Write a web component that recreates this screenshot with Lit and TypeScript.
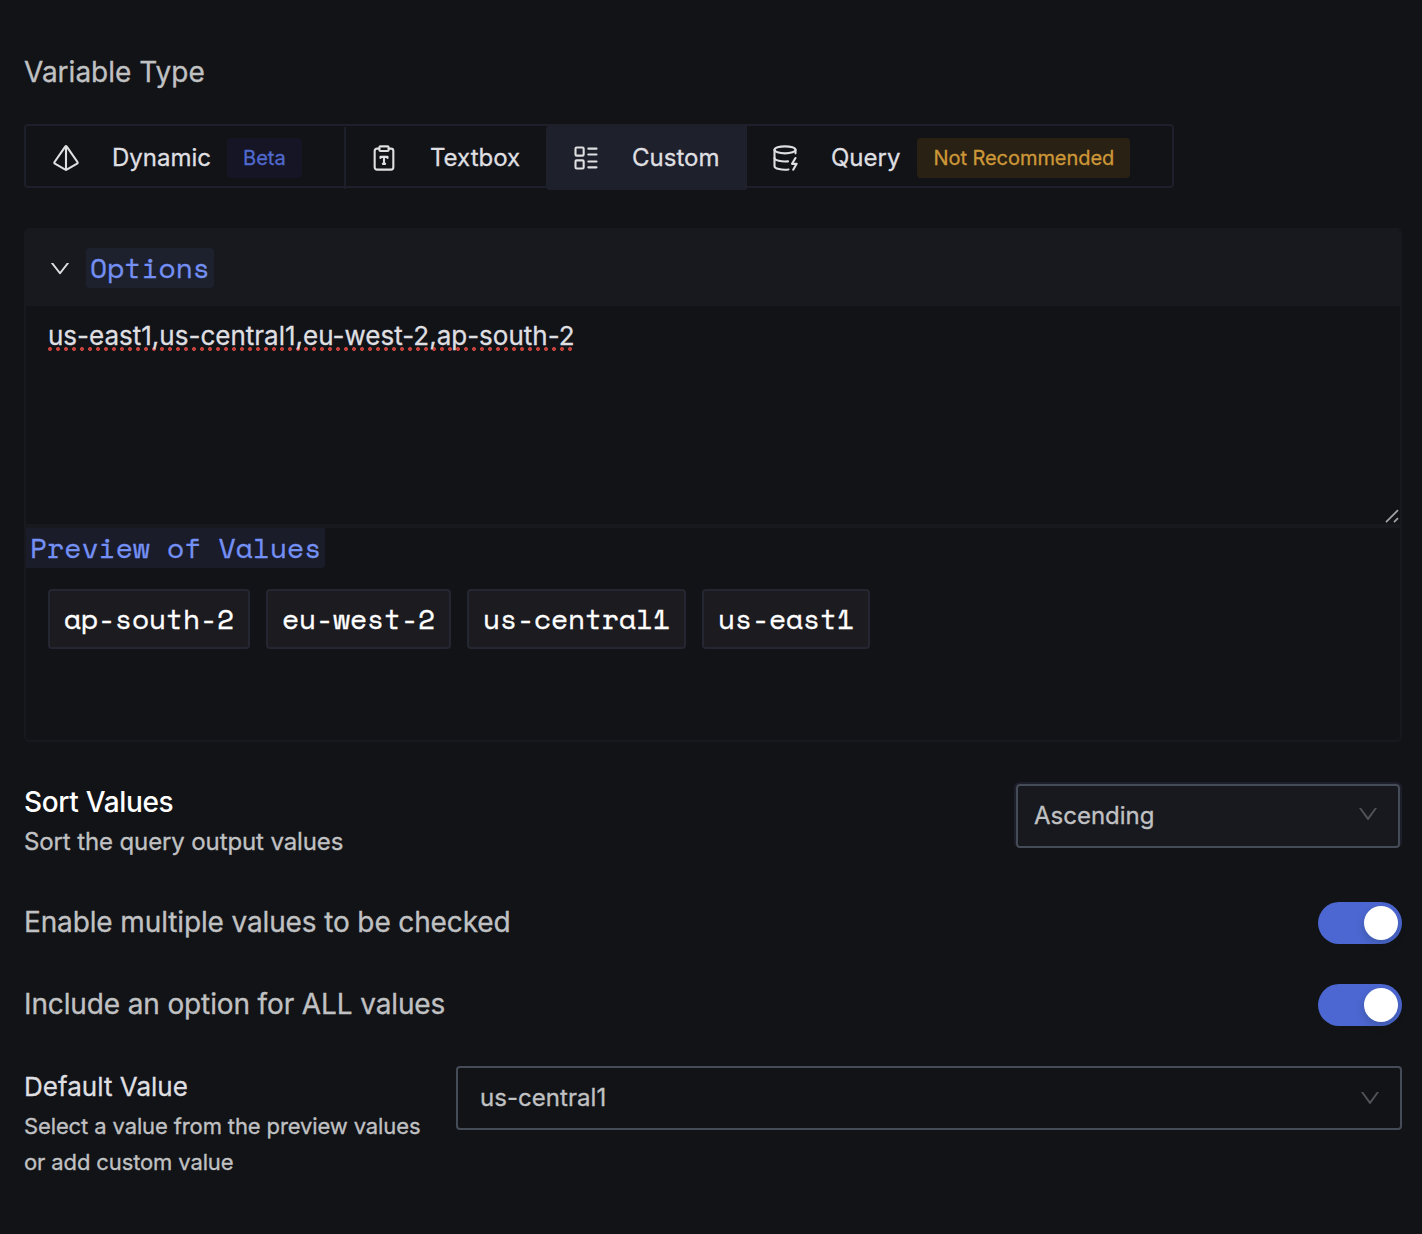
import { LitElement, html, css, svg, nothing } from "lit";
import { customElement, property, state } from "lit/decorators.js";
import { classMap } from "lit/directives/class-map.js";

const icons = {
  pyramid: svg`<path d="M2.5 16.88a1 1 0 0 1-.32-1.43l9-13.02a1 1 0 0 1 1.64 0l9 13.01a1 1 0 0 1-.32 1.44l-8.51 4.86a2 2 0 0 1-1.98 0Z"/><path d="M12 2v20"/>`,
  clipboard: svg`<rect x="8" y="2" width="8" height="4" rx="1"/><path d="M16 4h2a2 2 0 0 1 2 2v14a2 2 0 0 1-2 2H6a2 2 0 0 1-2-2V6a2 2 0 0 1 2-2h2"/><path d="M9 12v-1h6v1"/><path d="M11 17h2"/><path d="M12 11v6"/>`,
  list: svg`<rect x="3" y="3" width="7" height="7" rx="1"/><rect x="3" y="14" width="7" height="7" rx="1"/><path d="M14 4h7"/><path d="M14 9h7"/><path d="M14 15h7"/><path d="M14 20h7"/>`,
  database: svg`<ellipse cx="12" cy="5" rx="9" ry="3"/><path d="M3 5V19A9 3 0 0 0 15 21.84"/><path d="M21 5V8"/><path d="M21 12L18 17H22L19 22"/><path d="M3 12A9 3 0 0 0 14.59 14.87"/>`,
};

const selectArrow = html`<svg class="arrow" viewBox="0 0 1024 1024" width="24" height="24"><path fill="currentColor" d="M884 256h-75c-5.1 0-9.9 2.5-12.9 6.6L512 654.2 227.9 262.6c-3-4.1-7.8-6.6-12.9-6.6h-75c-6.5 0-10.3 7.4-6.5 12.7l352.6 486.1c12.8 17.6 39 17.6 51.7 0l352.6-486.1c3.9-5.3.1-12.7-6.4-12.7z"/></svg>`;

type IconName = keyof typeof icons;
interface Tab { id: string; label: string; icon: IconName; badge?: string; tone?: string; }

const tabs: Tab[] = [
  { id: "dynamic", label: "Dynamic", icon: "pyramid", badge: "Beta", tone: "beta" },
  { id: "textbox", label: "Textbox", icon: "clipboard" },
  { id: "custom", label: "Custom", icon: "list" },
  { id: "query", label: "Query", icon: "database", badge: "Not Recommended", tone: "warn" },
];

@customElement("toggle-switch")
export class ToggleSwitch extends LitElement {
  @property({ type: Boolean, reflect: true }) checked = false;
  static styles = css`
    :host { display: block; flex: none; }
    .track { display: flex; box-sizing: border-box; width: 84px; height: 42px; padding: 4px; border: 0; border-radius: 21px; background: #2c303b; justify-content: flex-start; }
    .on { background: #4c67d1; justify-content: flex-end; }
    .knob { width: 34px; height: 34px; border-radius: 50%; background: #fff; box-shadow: 0 4px 8px rgba(0, 35, 11, 0.2); }
  `;
  render() {
    return html`<button class=${classMap({ track: true, on: this.checked })} role="switch" aria-checked=${this.checked} @click=${() => (this.checked = !this.checked)}><span class="knob"></span></button>`;
  }
}

@customElement("app-root")
export class AppRoot extends LitElement {
  @state() private active = "custom";
  @state() private options = "us-east1,us-central1,eu-west-2,ap-south-2";

  static styles = css`
    :host { display: block; box-sizing: border-box; width: 1422px; height: 1234px; padding: 50px 20px 0 24px; overflow: hidden; background: #121317; color: #c0c1c3; font: 400 28px/44px Inter, sans-serif; white-space: nowrap; -webkit-text-stroke: 0.3px currentColor; }
    svg { display: block; flex: none; }
    .title { height: 44px; letter-spacing: 0; }

    .tabs { display: flex; box-sizing: border-box; width: 1150px; height: 64px; margin-top: 30px; border: 2px solid #1d1f2a; border-radius: 4px; color: #dfdfe1; font-size: 24px; line-height: 40px; }
    .tab { display: flex; box-sizing: border-box; align-items: center; height: 62px; padding: 0 0 0 26px; margin-top: 1px; }
    .tab svg { margin-right: 32px; }
    .dynamic { width: 320px; border-right: 2px solid #1d1f2a; }
    .textbox { width: 200px; padding-left: 24px; }
    .custom { width: 201px; padding-left: 26px; }
    .query { flex: 1; padding-left: 24px; }
    .selected { height: 64px; margin-top: 0; background: #1e202b; border-radius: 4px 0 2px 4px; }
    .badge { height: 40px; margin-left: 16px; padding: 0 16px; border-radius: 4px; font-size: 20px; letter-spacing: 0.05px; }
    .beta { background: #151525; color: #5069cf; }
    .warn { margin-left: 17px; background: #2a2115; color: #cd9837; letter-spacing: -0.05px; }

    .panel { box-sizing: border-box; width: 1378px; height: 514px; margin-top: 40px; border: 2px solid #17191f; border-radius: 6px; overflow: hidden; }
    .panel-head { display: flex; align-items: center; height: 76px; padding-left: 22px; background: #17191e; color: #dfdfe1; }
    .panel-head svg { margin-right: 14px; }
    .code { display: block; width: max-content; height: 40px; padding: 0 4px; border-radius: 4px; background: #1d212d; color: #7490f5; font: 400 28px/40px "Space Mono", "DejaVu Sans Mono", monospace; letter-spacing: 0; }
    .editor { display: flex; justify-content: space-between; box-sizing: border-box; height: 222px; padding: 8px 0 0 22px; border-bottom: 4px solid #17191f; color: #dfdfe1; font-size: 26px; letter-spacing: 0; }
    .spell { height: 37px; background: radial-gradient(circle at 2px 2px, #c4423b 1.6px, transparent 2.3px) 0 33px / 8px 4px repeat-x; }
    .grip { align-self: flex-end; }
    .preview { background: #1a1c29; border-radius: 0 0 4px 0; }
    .chips { display: flex; gap: 16px; padding: 21px 22px 0; }
    .chip { box-sizing: border-box; height: 60px; padding: 0 14px; border: 2px solid #242731; border-radius: 4px; background: #1c1b20; color: #fff; font: 400 28px/56px "Space Mono", "DejaVu Sans Mono", monospace; letter-spacing: -0.14px; -webkit-text-stroke-width: 0.35px; }

    .row { display: flex; justify-content: space-between; width: 1378px; letter-spacing: -0.13px; }
    .sort { margin-top: 38px; height: 122px; }
    .strong { color: #fff; font-weight: 500; letter-spacing: -0.33px; -webkit-text-stroke-width: 0; }
    .hint { font-size: 24px; line-height: 36px; letter-spacing: -0.12px; }
    .sort-field { box-sizing: border-box; width: 388px; height: 66px; border: 2px solid #1d1f2a; border-bottom: 0; border-radius: 6px; margin-top: 2px; }
    .select { display: flex; box-sizing: border-box; align-items: center; justify-content: space-between; height: 64px; border: 2px solid #454b57; border-radius: 4px; font-size: 24px; letter-spacing: 0; }
    .sort-field .select { padding: 0 18px 0 16px; background: #17191e; }
    .arrow { margin-top: -4px; color: #515358; }
    .toggle { height: 82px; }
    .toggle span { margin-top: -2px; }
    .default { height: 120px; margin-top: -2px; }
    .default-name { height: 43px; padding-top: 1px; color: #dfdfe1; font-size: 26px; letter-spacing: 0.02px; }
    .default-hint { font-size: 22px; line-height: 36px; letter-spacing: -0.12px; }
    .default .select { width: 946px; margin-top: 2px; padding: 0 18px 0 22px; letter-spacing: 0.05px; }
    .default .arrow { margin-top: 0; }
  `;

  private renderTab(t: Tab) {
    return html`<div class=${classMap({ tab: true, [t.id]: true, selected: this.active === t.id })} @click=${() => (this.active = t.id)}>
      <svg width="28" height="28" viewBox="0 0 24 24" fill="none" stroke="currentColor" stroke-width="1.8" stroke-linecap="round" stroke-linejoin="round">${icons[t.icon]}</svg>
      <span class="label">${t.label}</span>
      ${t.badge ? html`<span class="badge ${t.tone}">${t.badge}</span>` : nothing}
    </div>`;
  }

  render() {
    const values = this.options.split(",").sort();
    return html`
      <div class="title">Variable Type</div>
      <div class="tabs">${tabs.map((t) => this.renderTab(t))}</div>

      <section class="panel">
        <div class="panel-head">
          <svg width="24" height="24" viewBox="0 0 1024 1024"><path fill="currentColor" transform="rotate(90 512 512)" d="M765.7 486.8L314.9 134.7A7.97 7.97 0 00302 141v77.3c0 4.9 2.3 9.6 6.1 12.6l360 281.1-360 281.1c-3.9 3-6.1 7.7-6.1 12.6V883c0 6.7 7.7 10.4 12.9 6.3l450.8-352.1a31.96 31.96 0 000-50.4z"/></svg>
          <span class="code">Options</span>
        </div>
        <div class="editor">
          <span class="spell">${this.options}</span>
          <svg class="grip" width="16" height="16" viewBox="0 0 16 16" stroke="#a2a3a5" stroke-width="1.7"><path d="M2 14.2L14 2.2M10 14.2L14 10.2"/></svg>
        </div>
        <span class="code preview">Preview of Values</span>
        <div class="chips">${values.map((v) => html`<span class="chip">${v}</span>`)}</div>
      </section>

      <div class="row sort">
        <div>
          <div class="strong">Sort Values</div>
          <div class="hint">Sort the query output values</div>
        </div>
        <div class="sort-field"><div class="select"><span>Ascending</span>${selectArrow}</div></div>
      </div>
      <div class="row toggle"><span>Enable multiple values to be checked</span><toggle-switch checked></toggle-switch></div>
      <div class="row toggle"><span>Include an option for ALL values</span><toggle-switch checked></toggle-switch></div>
      <div class="row default">
        <div>
          <div class="default-name">Default Value</div>
          <div class="default-hint">Select a value from the preview values<br />or add custom value</div>
        </div>
        <div class="select"><span>us-central1</span>${selectArrow}</div>
      </div>
    `;
  }
}
